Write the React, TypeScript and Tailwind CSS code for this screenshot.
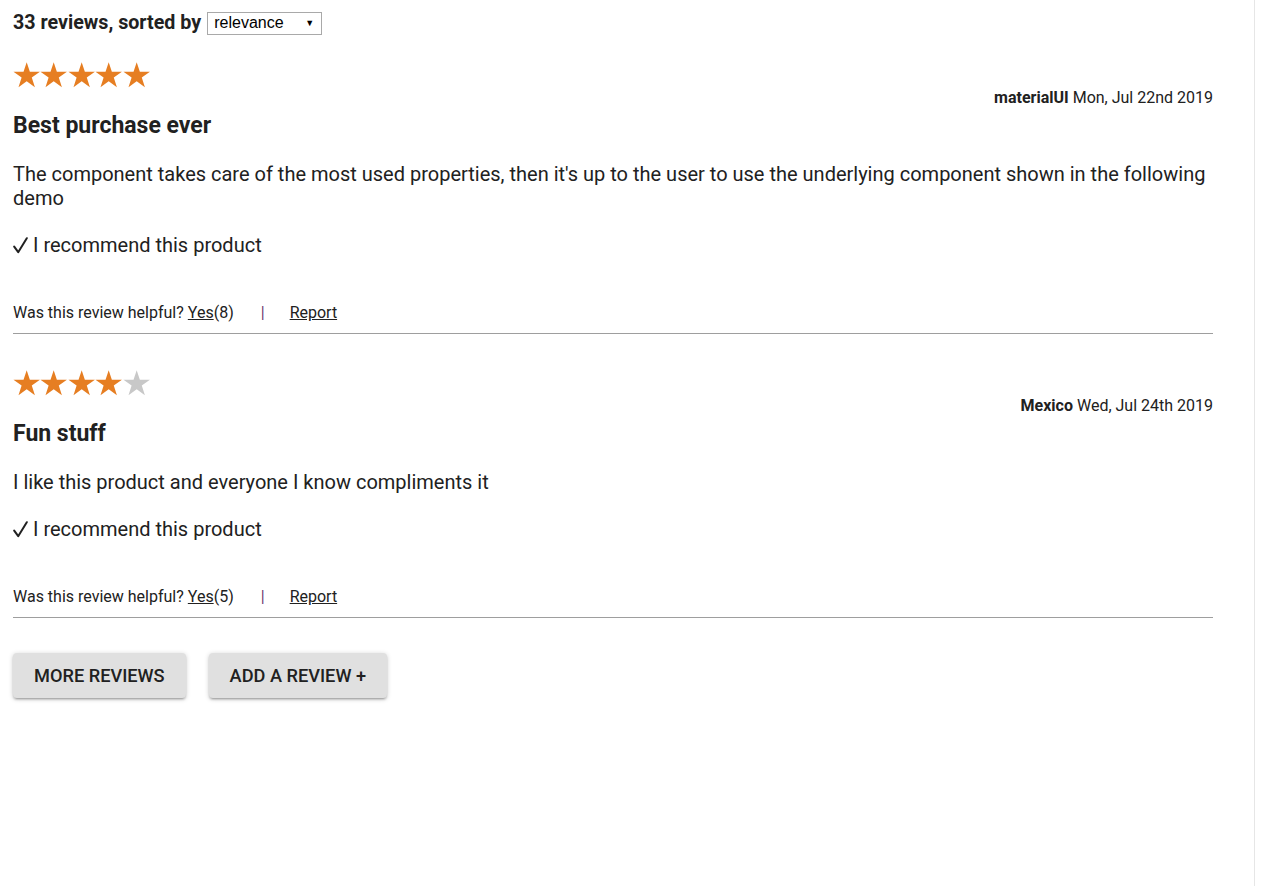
import React from "react";

type Review = {
  rating: number;
  user: string;
  date: string;
  title: string;
  body: string;
  helpful: number;
};

const reviews: Review[] = [
  {
    rating: 5,
    user: "materialUI",
    date: "Mon, Jul 22nd 2019",
    title: "Best purchase ever",
    body: "The component takes care of the most used properties, then it's up to the user to use the underlying component shown in the following demo",
    helpful: 8,
  },
  {
    rating: 4,
    user: "Mexico",
    date: "Wed, Jul 24th 2019",
    title: "Fun stuff",
    body: "I like this product and everyone I know compliments it",
    helpful: 5,
  },
];

function Star({ filled }: { filled: boolean }) {
  return (
    <svg width="27.4" height="26" viewBox="0 0 24 23" className={filled ? "text-[#e67e22]" : "text-[#c8c8c8]"}>
      <path
        fill="currentColor"
        d="M12 0.3l2.8 8.3h8.9l-7.2 5.2 2.75 8.5L12 17.1l-7.25 5.2 2.75-8.5-7.2-5.2h8.9z"
      />
    </svg>
  );
}

function Check() {
  return (
    <svg width="15" height="17" viewBox="0 0 15 17" className="text-[#212121]">
      <path d="M1.2 9.6 L5.2 15.2 L13.8 1.2" fill="none" stroke="currentColor" strokeWidth="2" strokeLinecap="round" strokeLinejoin="round" />
    </svg>
  );
}

function ReviewItem({ review }: { review: Review }) {
  return (
    <div className="flex flex-col border-b border-[#9e9e9e]">
      <div className="flex mt-[36px] h-[25px] items-center">
        {[1, 2, 3, 4, 5].map((i) => (
          <Star key={i} filled={i <= review.rating} />
        ))}
      </div>
      <div className="text-right text-[16px] leading-[20px] mt-[1px]">
        <span className="font-bold">{review.user}</span> {review.date}
      </div>
      <h3 className="text-[23px] leading-[30px] font-bold mt-[3px]">{review.title}</h3>
      <p className="text-[20px] leading-[24px] mt-[21px]">{review.body}</p>
      <p className="text-[20px] leading-[24px] mt-[23px] flex items-center">
        <Check />
        <span className="ml-[5px]">I recommend this product</span>
      </p>
      <div className="text-[16px] leading-[20px] mt-[46px] mb-[10px] flex items-center">
        <span>Was this review helpful?</span>
        <a href="#" className="underline ml-[4px]">Yes</a>
        <span>({review.helpful})</span>
        <span className="ml-[27px] text-[#6e3a6e]">|</span>
        <a href="#" className="underline ml-[25px]">Report</a>
      </div>
    </div>
  );
}

export default function App() {
  return (
    <div className="w-[1255px] min-h-[886px] border-r border-[#e6e6e6] bg-white text-[#212121] font-['Roboto',sans-serif]">
      <div className="w-[1200px] ml-[13px]">
        <div className="flex items-center pt-[11px] -mb-[9px]">
          <span className="text-[19.7px] leading-[24px] font-bold">33 reviews, sorted by</span>
          <div className="ml-[6px] w-[115px] h-[23px] border border-[#a9a9a9] flex items-center justify-between pl-[6px] pr-[7px] text-[16px] leading-[20px] font-['Liberation_Sans',sans-serif] text-black">
            <span>relevance</span>
            <span className="text-[9px]">▼</span>
          </div>
        </div>
        {reviews.map((r) => (
          <ReviewItem key={r.user} review={r} />
        ))}
        <div className="flex gap-[23px] mt-[35px]">
          <button className="h-[45px] px-[21px] rounded-[4px] bg-[#e0e0e0] text-[18.2px] font-medium uppercase text-[#212121] shadow-[0_1px_5px_0_rgba(0,0,0,0.2),0_2px_2px_0_rgba(0,0,0,0.14),0_3px_1px_-2px_rgba(0,0,0,0.12)]">
            More reviews
          </button>
          <button className="h-[45px] px-[21px] rounded-[4px] bg-[#e0e0e0] text-[18.2px] font-medium uppercase text-[#212121] shadow-[0_1px_5px_0_rgba(0,0,0,0.2),0_2px_2px_0_rgba(0,0,0,0.14),0_3px_1px_-2px_rgba(0,0,0,0.12)]">
            Add a review +
          </button>
        </div>
      </div>
    </div>
  );
}
